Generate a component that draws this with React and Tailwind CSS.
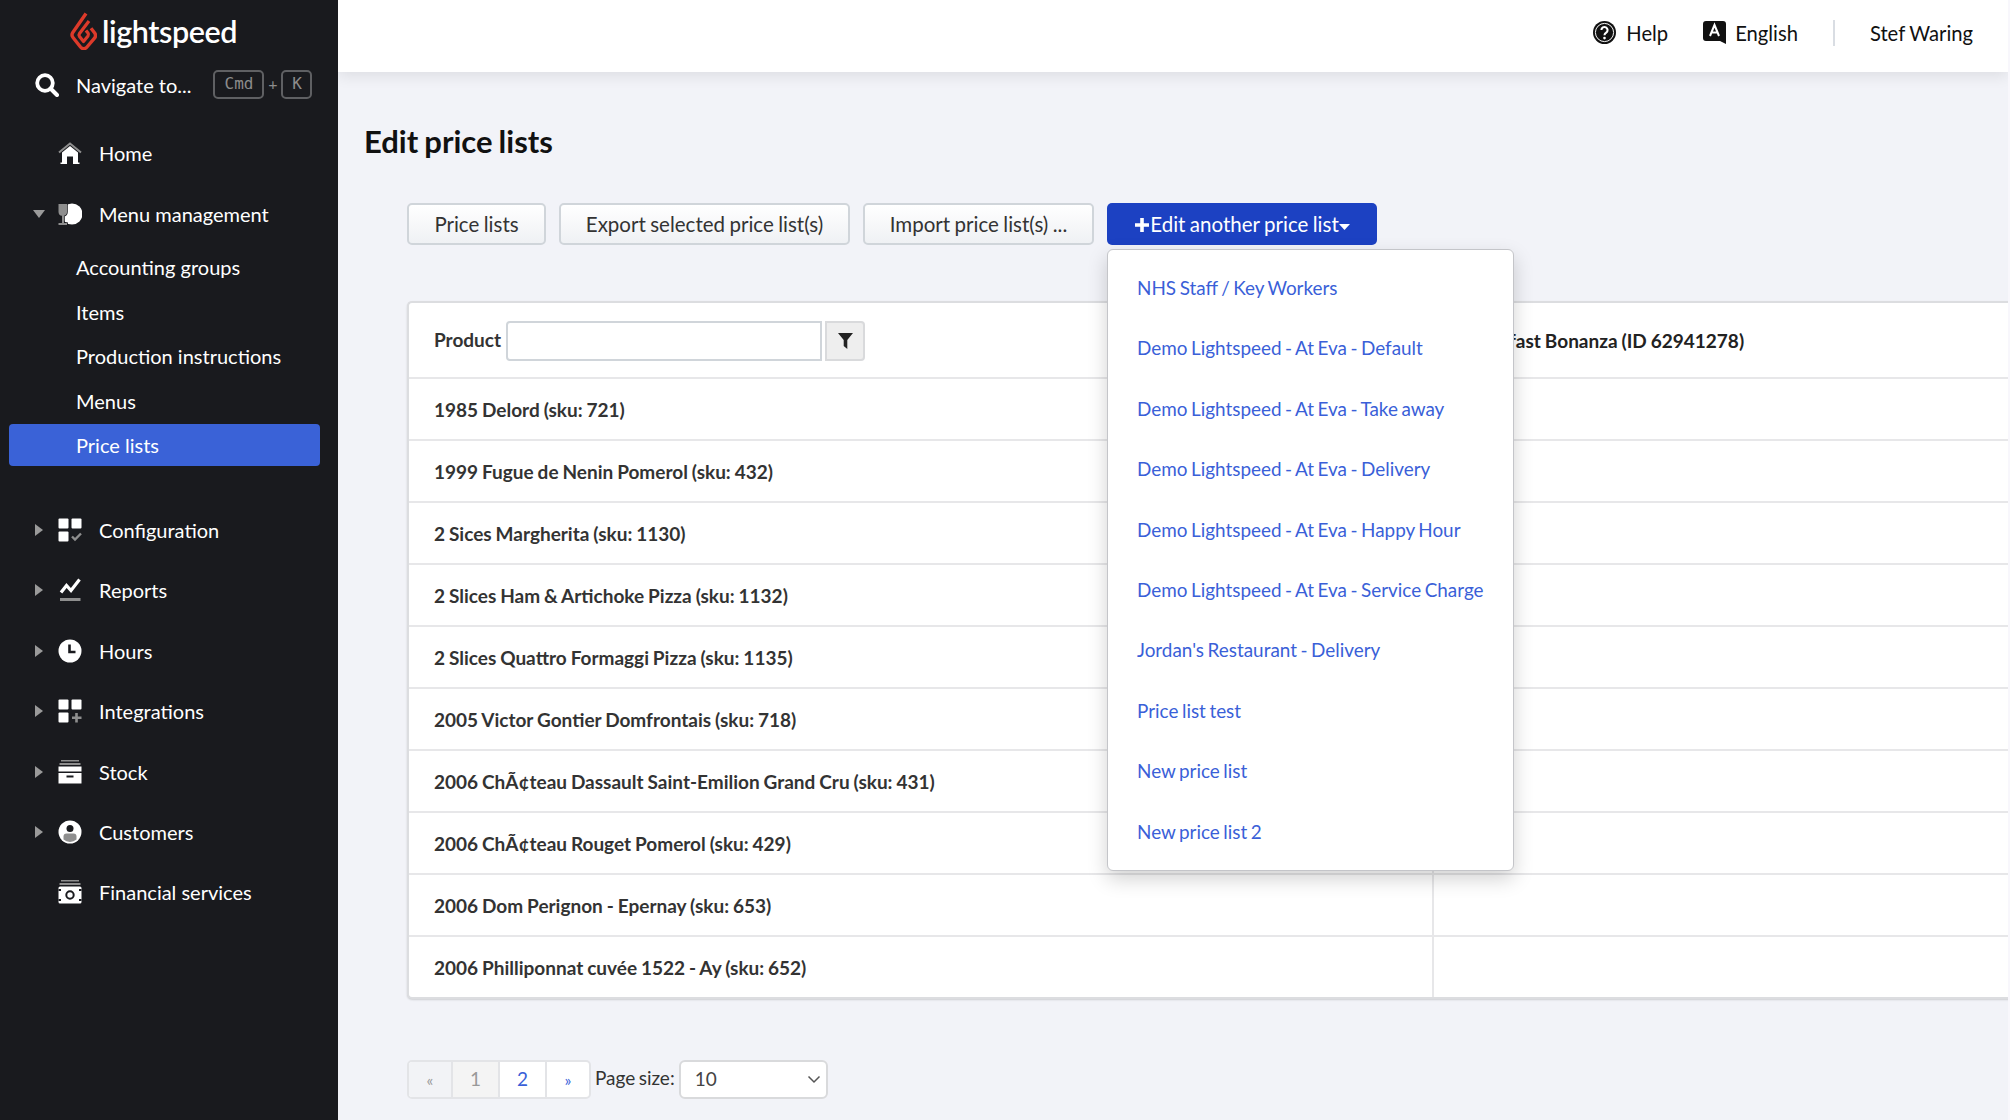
import React from 'react';

const G = '#8e8e8e';
const W = '#ffffff';
const D = '#191a1e';

const Svg = ({ children, size = 24, box = 24 }) => (
  <svg width={size} height={size} viewBox={`0 0 ${box} ${box}`} fill="none">{children}</svg>
);

const HomeIcon = () => (
  <Svg>
    <path d="M1 11.500 12 2.500l11 9" stroke={G} strokeWidth="2" />
    <path d="M4 11.500 12 5l8 6.500V21.500h1.500V23H15v-7.500H9V23H2.500v-1.500H4Z" fill={W} />
  </Svg>
);
const MenuIcon = () => (
  <Svg>
    <circle cx="14" cy="12" r="10.500" fill={W} />
    <path d="M0.500 2h8.500v8a4 4 0 0 1-3 3.800V21h3v2H0.500v-2h3.500v-7.200a4 4 0 0 1-3.500-3.800Z" fill={G} stroke={D} strokeWidth="1.500" paintOrder="stroke" />
  </Svg>
);
const ConfigIcon = () => (
  <Svg>
    <rect x="0.500" y="0.500" width="10" height="10" rx="1" fill={W} />
    <rect x="13.500" y="0.500" width="10" height="10" rx="1" fill={W} />
    <rect x="0.500" y="13.500" width="10" height="10" rx="1" fill={W} />
    <path d="m14 18.500 3 3 6-6" stroke={G} strokeWidth="2.400" />
  </Svg>
);
const ReportsIcon = () => (
  <Svg>
    <path d="M3 14.500 8.500 7.500l4.500 5L21.500 1.500" stroke={W} strokeWidth="3.200" />
    <rect x="2" y="20" width="20.500" height="3" fill={G} />
  </Svg>
);
const HoursIcon = () => (
  <Svg>
    <circle cx="12" cy="12" r="11.500" fill={W} />
    <path d="M11.500 5.500V13h6" stroke={D} strokeWidth="2.600" />
  </Svg>
);
const IntegrationsIcon = () => (
  <Svg>
    <rect x="0.500" y="0.500" width="10" height="10" rx="1" fill={W} />
    <rect x="13.500" y="0.500" width="10" height="10" rx="1" fill={W} />
    <rect x="0.500" y="13.500" width="10" height="10" rx="1" fill={W} />
    <path d="M18.500 14v9.500M14 18.800h9.500" stroke={G} strokeWidth="2.600" />
  </Svg>
);
const StockIcon = () => (
  <Svg>
    <rect x="3" y="0" width="18" height="1.500" fill={G} />
    <rect x="1.500" y="3" width="21" height="2" fill={G} />
    <rect x="0.500" y="6.500" width="23" height="5" fill={W} />
    <path d="M0.500 13h23v10.500H0.500Z" fill={W} />
    <rect x="8.500" y="15.500" width="7" height="2" fill={D} />
  </Svg>
);
const CustomersIcon = () => (
  <Svg>
    <circle cx="12" cy="12" r="11.500" fill={W} />
    <circle cx="12" cy="8.500" r="3.500" fill={D} />
    <path d="M5.500 19.500v-3a3 3 0 0 1 3-3h7a3 3 0 0 1 3 3v3a10 10 0 0 1-13 0Z" fill={G} />
  </Svg>
);
const FinancialIcon = () => (
  <Svg>
    <rect x="3" y="0" width="18" height="1.500" fill={G} />
    <rect x="1.500" y="3" width="21" height="2" fill={G} />
    <rect x="0.500" y="6.500" width="23" height="17" rx="1.500" fill={W} />
    <circle cx="12" cy="15" r="3.700" stroke={D} strokeWidth="2" />
    <path d="M0.500 10h2.500M21 10h2.500M0.500 20h2.500M21 20h2.500" stroke={D} strokeWidth="2" />
  </Svg>
);

const Caret = ({ open }) => (
  <span className="flex w-[14px] justify-center">
    {open ? (
      <svg width="12" height="8" viewBox="0 0 12 8"><path d="M0 0h12L6 8Z" fill="#9a9a9a" /></svg>
    ) : (
      <svg width="8" height="12" viewBox="0 0 8 12"><path d="M0 0l8 6-8 6Z" fill="#9a9a9a" /></svg>
    )}
  </span>
);

const NavItem = ({ icon, label, caret, open }) => (
  <div className="flex h-[60.4px] items-center pl-[32px] text-[20px] text-white">
    <span className="w-[14px]">{caret && <Caret open={open} />}</span>
    <span className="ml-[12px] mr-[17px] flex w-[24px] justify-center">{icon}</span>
    <span>{label}</span>
  </div>
);

const SubItem = ({ label, active }) => (
  <div className={`my-[1.300px] ml-[9px] flex h-[42px] w-[311px] items-center rounded-[4px] pl-[67px] text-[20px] text-white ${active ? 'bg-[#3a62d7]' : ''}`}>
    {label}
  </div>
);

const Kbd = ({ children, w }) => (
  <span className={`flex h-[29px] items-center justify-center rounded-[5px] border-2 border-[#5f6063] text-[16px] leading-none text-[#8c8c8c] ${w}`} style={{ fontFamily: '"DejaVu Sans Mono", monospace' }}>
    {children}
  </span>
);

const Sidebar = () => (
  <aside className="flex w-[338px] shrink-0 flex-col bg-[#191a1e]">
    <div className="flex h-[60px] items-center pl-[70px] pt-[2px]">
      <svg width="27" height="38" viewBox="0 0 27 38" fill="none">
        <path d="M16 1.500 2.800 20.500c-1.300 2-1 3.500.2 5l7.500 9.500c2 2.300 4.500 2.300 6.500 0l7.500-8.800c1.300-1.700 1.300-3.700 0-5.400l-3.500-4.500" stroke="#dc3a2a" strokeWidth="3.400" strokeLinejoin="round" />
        <path d="M19 9 9.500 21.500c-.7 1-.7 2 0 3l4 5 4.500-5.500c.7-1 .7-2 0-3l-2-2.500" stroke="#dc3a2a" strokeWidth="3.200" strokeLinejoin="round" />
      </svg>
      <span className="ml-[5px] text-[30.500px] font-semibold leading-none tracking-[-0.4px] text-white">lightspeed</span>
    </div>
    <div className="flex h-[52px] items-center pl-[35px]">
      <svg width="24" height="24" viewBox="0 0 24 24" fill="none" className="-translate-y-[1px]">
        <circle cx="10" cy="10" r="7.800" stroke="#fff" strokeWidth="3.800" />
        <path d="M15.500 15.500 22 22" stroke="#fff" strokeWidth="4" strokeLinecap="round" />
      </svg>
      <span className="ml-[17px] -translate-y-[1px] text-[20px] text-white">Navigate to...</span>
      <div className="ml-[22px] flex -translate-y-[2px] items-center">
        <Kbd w="w-[51px]">Cmd</Kbd>
        <span className="w-[17px] text-center text-[16px] text-[#8c8c8c]">+</span>
        <Kbd w="w-[31px]">K</Kbd>
      </div>
    </div>
    <div className="mt-[11px]">
      <NavItem icon={<HomeIcon />} label="Home" />
      <NavItem icon={<MenuIcon />} label="Menu management" caret open />
    </div>
    <div className="mt-[1px] flex flex-col">
      <SubItem label="Accounting groups" />
      <SubItem label="Items" />
      <SubItem label="Production instructions" />
      <SubItem label="Menus" />
      <SubItem label="Price lists" active />
    </div>
    <div className="mt-[32px]">
      <NavItem icon={<ConfigIcon />} label="Configuration" caret />
      <NavItem icon={<ReportsIcon />} label="Reports" caret />
      <NavItem icon={<HoursIcon />} label="Hours" caret />
      <NavItem icon={<IntegrationsIcon />} label="Integrations" caret />
      <NavItem icon={<StockIcon />} label="Stock" caret />
      <NavItem icon={<CustomersIcon />} label="Customers" caret />
      <NavItem icon={<FinancialIcon />} label="Financial services" />
    </div>
  </aside>
);

const Header = () => (
  <header className="relative z-10 flex h-[72px] shrink-0 items-center justify-end gap-[35px] bg-white pb-[6px] pr-[35px] text-[20.200px] text-[#111] shadow-[0_4px_14px_rgba(0,0,0,0.09)] [word-spacing:-0.5px]">
    <div className="flex items-center gap-[10px]">
      <svg width="23" height="23" viewBox="0 0 24 24" fill="none">
        <circle cx="12" cy="12" r="12" fill="#111" />
        <circle cx="12" cy="12" r="9.500" stroke="#fff" strokeWidth="1" />
        <path d="M8.800 9.500a3.200 3.200 0 1 1 5 2.600c-1.200.8-1.800 1.300-1.800 2.700" stroke="#fff" strokeWidth="2.200" />
        <circle cx="12" cy="17.800" r="1.400" fill="#fff" />
      </svg>
      <span>Help</span>
    </div>
    <div className="flex items-center gap-[9px]">
      <svg width="23" height="24" viewBox="0 0 23 24" fill="none">
        <path d="M3 0h17a3 3 0 0 1 3 3v20l-6-3H3a3 3 0 0 1-3-3V3a3 3 0 0 1 3-3Z" fill="#111" />
        <path d="M7 15 11.500 4 16 15M8.500 11.500h6" stroke="#fff" strokeWidth="2" />
      </svg>
      <span>English</span>
    </div>
    <div className="h-[26px] w-[2px] bg-[#d9dde3]" />
    <span>Stef Waring</span>
  </header>
);

const Btn = ({ children, w }) => (
  <button className={`flex h-[42px] items-center justify-center rounded-[5px] border-2 border-[#d0d5da] bg-gradient-to-b from-white to-[#eff1f4] text-[20.500px] text-[#333] [word-spacing:-0.8px] ${w}`}>
    {children}
  </button>
);

const lists = [
  'NHS Staff / Key Workers',
  'Demo Lightspeed - At Eva - Default',
  'Demo Lightspeed - At Eva - Take away',
  'Demo Lightspeed - At Eva - Delivery',
  'Demo Lightspeed - At Eva - Happy Hour',
  'Demo Lightspeed - At Eva - Service Charge',
  "Jordan's Restaurant - Delivery",
  'Price list test',
  'New price list',
  'New price list 2',
];

const Dropdown = () => (
  <div className="absolute left-0 top-[46px] z-20 w-[407px] rounded-[6px] border border-[#c4c5c9] bg-white py-[8px] shadow-[0_8px_20px_rgba(0,0,0,0.18)]">
    {lists.map((l) => (
      <div key={l} className="flex h-[60.400px] items-center pl-[29px] text-[18.900px] text-[#3a5fd8] [word-spacing:-1.3px]">{l}</div>
    ))}
  </div>
);

const products = [
  '1985 Delord (sku: 721)',
  '1999 Fugue de Nenin Pomerol (sku: 432)',
  '2 Sices Margherita (sku: 1130)',
  '2 Slices Ham & Artichoke Pizza (sku: 1132)',
  '2 Slices Quattro Formaggi Pizza (sku: 1135)',
  '2005 Victor Gontier Domfrontais (sku: 718)',
  '2006 ChÃ¢teau Dassault Saint-Emilion Grand Cru (sku: 431)',
  '2006 ChÃ¢teau Rouget Pomerol (sku: 429)',
  '2006 Dom Perignon - Epernay (sku: 653)',
  '2006 Philliponnat cuvée 1522 - Ay (sku: 652)',
];

const Table = () => (
  <div className="ml-[69px] mt-[56px] w-[1620px] rounded-l-[5px] border-b-2 border-l-2 border-t-2 border-[#dcdde0] bg-white text-[19px] font-bold text-[#333] shadow-[0_1px_2px_rgba(0,0,0,0.15)] [word-spacing:-0.7px]">
    <div className="flex h-[76px] border-b-2 border-[#e7e7e9]">
      <div className="flex w-[1025px] items-center pl-[25px] pt-[1px]">
        <span className="mr-[5px]">Product</span>
        <div className="h-[40px] w-[316px] rounded-l-[4px] border-2 border-[#d0d5da] bg-white" />
        <div className="ml-[3px] flex h-[40px] w-[40px] items-center justify-center rounded-r-[4px] border-2 border-[#d9dadc] bg-[#eeeeee]">
          <svg width="15" height="16" viewBox="0 0 15 16"><path d="M0 0h15L9.300 7v9L5.700 13V7Z" fill="#222" /></svg>
        </div>
      </div>
      <div className="flex items-center pl-[26px] pt-[2px] text-[#222]">Breakfast Bonanza (ID 62941278)</div>
    </div>
    {products.map((p, i) => (
      <div key={p} className={i < products.length - 1 ? 'flex h-[62px] border-b-2 border-[#e7e7e9]' : 'flex h-[60px]'}>
        <div className="flex w-[1025px] items-center border-r-2 border-[#e7e7e9] pl-[25px] pt-[2px]">{p}</div>
      </div>
    ))}
  </div>
);

const Pager = () => (
  <div className="ml-[69px] mt-[61px] flex items-center text-[19px]">
    <div className="flex h-[39px] w-[184px] overflow-hidden rounded-[5px] border-2 border-[#e3e4e7] bg-white">
      <div className="flex w-[44px] items-center justify-center border-r-2 border-[#e3e4e7] bg-[#f2f3f6] text-[16px] text-[#999]">«</div>
      <div className="flex w-[47px] items-center justify-center border-r-2 border-[#e3e4e7] bg-[#f4f4f4] text-[#999]">1</div>
      <div className="flex w-[47px] items-center justify-center border-r-2 border-[#e3e4e7] text-[#3a5fd8]">2</div>
      <div className="flex flex-1 items-center justify-center text-[16px] text-[#3a5fd8]">»</div>
    </div>
    <span className="ml-[4px] mr-[4px] -translate-y-[1px] text-[#333] [word-spacing:-1.5px]">Page size:</span>
    <div className="flex h-[39px] w-[149px] items-center justify-between rounded-[6px] border-2 border-[#d9dadc] bg-white pl-[14px] pr-[5px] text-[#444]">
      <span>10</span>
      <svg width="14" height="9" viewBox="0 0 14 9" fill="none"><path d="m1.500 1.500 5.500 5.500 5.500-5.500" stroke="#555" strokeWidth="1.500" /></svg>
    </div>
  </div>
);

export default function App() {
  return (
    <div className="flex h-[1120px] w-[2010px] overflow-hidden bg-[#f8f7fc]" style={{ fontFamily: 'Lato, "Liberation Sans", sans-serif' }}>
      <Sidebar />
      <div className="flex w-[1670px] shrink-0 flex-col overflow-hidden bg-[#f2f3f8]">
        <Header />
        <main className="flex flex-col">
          <h1 className="ml-[26px] mt-[47px] h-[44px] text-[31px] font-bold leading-[44px] text-[#111] [word-spacing:-1.500px]">Edit price lists</h1>
          <div className="ml-[69px] mt-[40px] flex gap-[13px]">
            <Btn w="w-[139px]">Price lists</Btn>
            <Btn w="w-[291px]">Export selected price list(s)</Btn>
            <Btn w="w-[231px]">Import price list(s) ...</Btn>
            <div className="relative">
              <button className="flex h-[42px] w-[270px] items-center justify-center rounded-[5px] bg-[#1c41c2] text-[20.500px] text-white [word-spacing:-0.8px]">
                <svg width="16" height="16" viewBox="0 0 16 16" className="mt-[1px]"><path d="M8 1v14M1 8h14" stroke="#fff" strokeWidth="3.600" /></svg>
                <span>Edit another price list</span>
                <svg width="11" height="6" viewBox="0 0 11 6" className="mt-[5px]"><path d="M0 0h11L5.500 6Z" fill="#fff" /></svg>
              </button>
              <Dropdown />
            </div>
          </div>
          <Table />
          <Pager />
        </main>
      </div>
    </div>
  );
}
